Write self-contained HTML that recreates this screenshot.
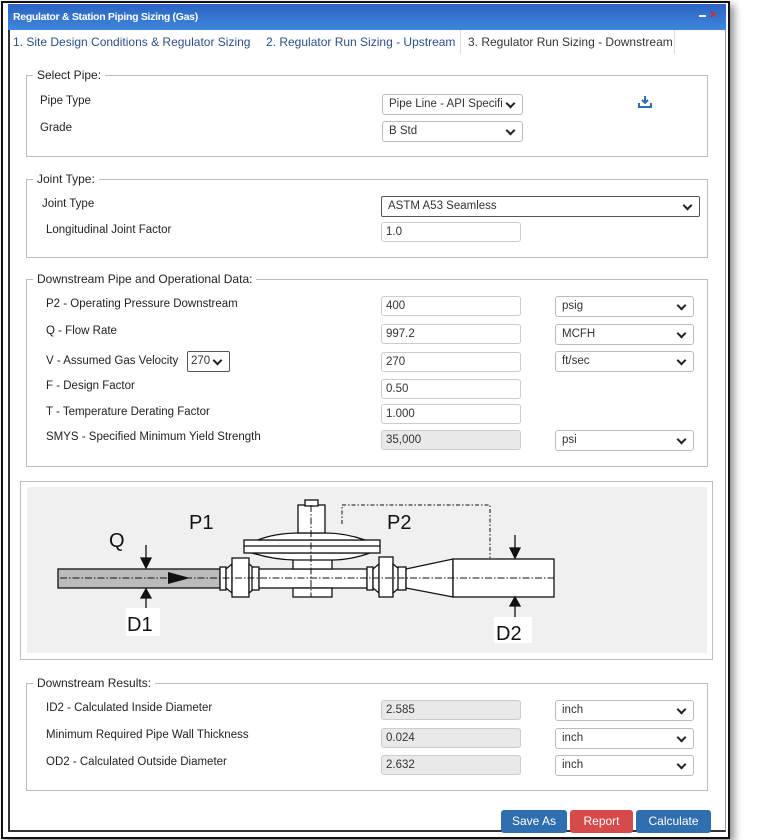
<!DOCTYPE html>
<html><head><meta charset="utf-8"><style>
*{box-sizing:border-box;margin:0;padding:0}
body{width:760px;height:840px;background:#fff;font-family:"Liberation Sans",sans-serif;font-size:11.5px;color:#333;position:relative;overflow:hidden}
.abs{position:absolute}
.outer{left:1px;top:1px;width:729px;height:838px;border:2px solid #111;box-shadow:4px 4px 8px rgba(0,0,0,.45);background:#fff}
.inner{left:8px;top:4px;width:718px;height:828px;border-left:2px solid #333;border-bottom:2px solid #333;border-right:1px solid #999}
.title{left:8px;top:4px;width:718px;height:26px;background:linear-gradient(#2a63c4,#3f86dc);color:#fff;font-weight:bold;font-size:10.5px;letter-spacing:-0.3px;padding:7px 0 0 5px}
.tab{top:30px;height:24px;padding-top:5px;color:#2d4f88;font-size:12px}
.lg{position:absolute;background:#fff;padding:0 4px;color:#222;font-size:12px}
.lbl{position:absolute;font-size:11.5px;color:#222}
.inp{position:absolute;height:20px;border:1px solid #ccc;border-radius:3px;background:#fff;padding:3px 0 0 4px;font-size:11.5px;color:#333}
.ro{background:#e9e9e9}
.sel{position:absolute;height:21px;border:1px solid #bbb;border-radius:3px;background:#fff;padding:3px 0 0 6px;font-size:11.5px;color:#333}
.sel:after{content:"";position:absolute;right:8px;top:5px;width:5px;height:5px;border-right:2px solid #222;border-bottom:2px solid #222;transform:rotate(45deg)}
.btn{position:absolute;top:810px;height:23px;color:#fff;font-size:12px;text-align:center;padding-top:4px;border-radius:3px}
</style></head><body>
<div class="abs outer"></div>
<div class="abs inner"></div>
<div class="abs title">Regulator &amp; Station Piping Sizing (Gas)</div>
<div class="abs" style="left:699px;top:15px;width:7px;height:2px;background:#fff"></div>
<div class="abs" style="left:710px;top:9px;color:#e21;font-weight:bold;font-size:11px">×</div>
<div class="abs tab" style="left:13px">1. Site Design Conditions &amp; Regulator Sizing</div>
<div class="abs tab" style="left:266px">2. Regulator Run Sizing - Upstream</div>
<div class="abs tab" style="left:460px;width:215px;padding-left:7px;border-left:1px solid #ddd;border-right:1px solid #ddd;color:#333">3. Regulator Run Sizing - Downstream</div>

<div class="abs" style="left:26px;top:75px;width:682px;height:82px;border:1px solid #bbb"></div>
<div class="lg" style="left:33px;top:68px">Select Pipe:</div>
<div class="lbl" style="left:40px;top:95px">Pipe Type</div>
<div class="lbl" style="left:40px;top:122px">Grade</div>
<div class="sel" style="left:382px;top:94px;width:141px">Pipe Line - API Specifi</div>
<div class="sel" style="left:382px;top:121px;width:141px">B Std</div>
<svg class="abs" style="left:638px;top:96px" width="14" height="12"><path d="M7 0v7M4 4l3 3 3-3" stroke="#2a6fb8" stroke-width="2" fill="none"/><path d="M1 7v4h12V7" stroke="#2a6fb8" stroke-width="2" fill="none"/></svg>

<div class="abs" style="left:26px;top:179px;width:682px;height:79px;border:1px solid #bbb"></div>
<div class="lg" style="left:33px;top:172px">Joint Type:</div>
<div class="lbl" style="left:42px;top:198px">Joint Type</div>
<div class="lbl" style="left:46px;top:224px">Longitudinal Joint Factor</div>
<div class="sel" style="left:381px;top:196px;width:319px;border-color:#555;border-radius:2px">ASTM A53 Seamless</div>
<div class="inp" style="left:381px;top:222px;width:140px">1.0</div>

<div class="abs" style="left:26px;top:279px;width:682px;height:188px;border:1px solid #bbb"></div>
<div class="lg" style="left:33px;top:272px">Downstream Pipe and Operational Data:</div>
<div class="lbl" style="left:46px;top:298px">P2 - Operating Pressure Downstream</div>
<div class="lbl" style="left:46px;top:325px">Q - Flow Rate</div>
<div class="lbl" style="left:46px;top:355px">V - Assumed Gas Velocity</div>
<div class="sel" style="left:187px;top:351px;width:43px;border-color:#555;border-radius:2px;padding-left:3px">270</div>
<div class="lbl" style="left:46px;top:380px">F - Design Factor</div>
<div class="lbl" style="left:46px;top:406px">T - Temperature Derating Factor</div>
<div class="lbl" style="left:46px;top:431px">SMYS - Specified Minimum Yield Strength</div>
<div class="inp" style="left:381px;top:296px;width:140px">400</div>
<div class="inp" style="left:381px;top:324px;width:140px">997.2</div>
<div class="inp" style="left:381px;top:352px;width:140px">270</div>
<div class="inp" style="left:381px;top:379px;width:140px">0.50</div>
<div class="inp" style="left:381px;top:404px;width:140px">1.000</div>
<div class="inp ro" style="left:381px;top:430px;width:140px">35,000</div>
<div class="sel" style="left:555px;top:296px;width:139px">psig</div>
<div class="sel" style="left:555px;top:324px;width:139px">MCFH</div>
<div class="sel" style="left:555px;top:351px;width:139px">ft/sec</div>
<div class="sel" style="left:555px;top:430px;width:139px">psi</div>

<div class="abs" style="left:20px;top:481px;width:693px;height:179px;border:1px solid #bbb"></div>
<svg class="abs" style="left:0;top:0" width="760" height="840" font-family="Liberation Sans, sans-serif">
<rect x="27" y="487" width="680" height="166" fill="#f0f0f0"/>
<g stroke="#111" stroke-width="1.3" fill="#fff">
<rect x="58" y="569" width="162" height="19" fill="#bbb"/>
<rect x="220" y="567" width="6" height="23"/>
<path d="M226 569 L232 564 V593 L226 588 Z"/>
<rect x="232" y="558" width="17" height="39"/>
<path d="M249 564 L255 569 V588 L249 593 Z"/>
<rect x="252" y="567" width="7" height="23"/>
<rect x="259" y="569" width="108" height="19"/>
<rect x="293" y="557" width="39" height="12"/>
<rect x="293" y="588" width="39" height="9"/>
<path d="M252 553 Q275 560 295 560 H332 Q350 560 370 553 Z"/>
<rect x="244" y="540" width="136" height="13"/>
<line x1="244" y1="546" x2="380" y2="546"/>
<path d="M258 540 Q275 533 300 533 H325 Q345 533 365 540 Z"/>
<rect x="298" y="505" width="27" height="28"/>
<rect x="305" y="500" width="13" height="6"/>
<rect x="367" y="567" width="6" height="23"/>
<path d="M373 569 L379 564 V593 L373 588 Z"/>
<rect x="379" y="557" width="14" height="40"/>
<path d="M393 564 L399 569 V588 L393 593 Z"/>
<rect x="398" y="567" width="8" height="23"/>
<path d="M406 569 L453 559 V597 L406 588 Z"/>
<rect x="453" y="559" width="101" height="38"/>
</g>
<g stroke="#111" stroke-width="1" fill="none" stroke-dasharray="7 2 1.5 2">
<line x1="60" y1="578" x2="554" y2="578"/>
<line x1="311" y1="505" x2="311" y2="597"/>
<path d="M342 524 V505 H490 V558" stroke-dasharray="4 2 1.5 2"/>
</g>
<path d="M168 572 L190 578 L168 584 Z" fill="#111"/>
<g stroke="#111" stroke-width="1.3" fill="#111">
<line x1="146" y1="545" x2="146" y2="562"/><path d="M141 558 L146 568 L151 558 Z"/>
<line x1="146" y1="594" x2="146" y2="610"/><path d="M141 598 L146 589 L151 598 Z"/>
<line x1="515" y1="535" x2="515" y2="552"/><path d="M510 548 L515 558 L520 548 Z"/>
<line x1="515" y1="602" x2="515" y2="618"/><path d="M510 606 L515 597 L520 606 Z"/>
</g>
<rect x="126" y="608" width="34" height="28" fill="#fff"/>
<rect x="494" y="617" width="38" height="26" fill="#fff"/>
<g font-size="20" fill="#111">
<text x="109" y="547">Q</text><text x="189" y="529">P1</text><text x="387" y="529">P2</text>
<text x="127" y="631">D1</text><text x="496" y="640">D2</text>
</g>
</svg>

<div class="abs" style="left:26px;top:683px;width:682px;height:108px;border:1px solid #bbb"></div>
<div class="lg" style="left:33px;top:676px">Downstream Results:</div>
<div class="lbl" style="left:46px;top:702px">ID2 - Calculated Inside Diameter</div>
<div class="lbl" style="left:46px;top:729px">Minimum Required Pipe Wall Thickness</div>
<div class="lbl" style="left:46px;top:756px">OD2 - Calculated Outside Diameter</div>
<div class="inp ro" style="left:381px;top:700px;width:140px">2.585</div>
<div class="inp ro" style="left:381px;top:728px;width:140px">0.024</div>
<div class="inp ro" style="left:381px;top:755px;width:140px">2.632</div>
<div class="sel" style="left:555px;top:700px;width:139px">inch</div>
<div class="sel" style="left:555px;top:728px;width:139px">inch</div>
<div class="sel" style="left:555px;top:755px;width:139px">inch</div>

<div class="btn" style="left:501px;width:66px;background:#2f6fb0">Save As</div>
<div class="btn" style="left:570px;width:63px;background:#d54b4b">Report</div>
<div class="btn" style="left:636px;width:75px;background:#2f6fb0">Calculate</div>
</body></html>
